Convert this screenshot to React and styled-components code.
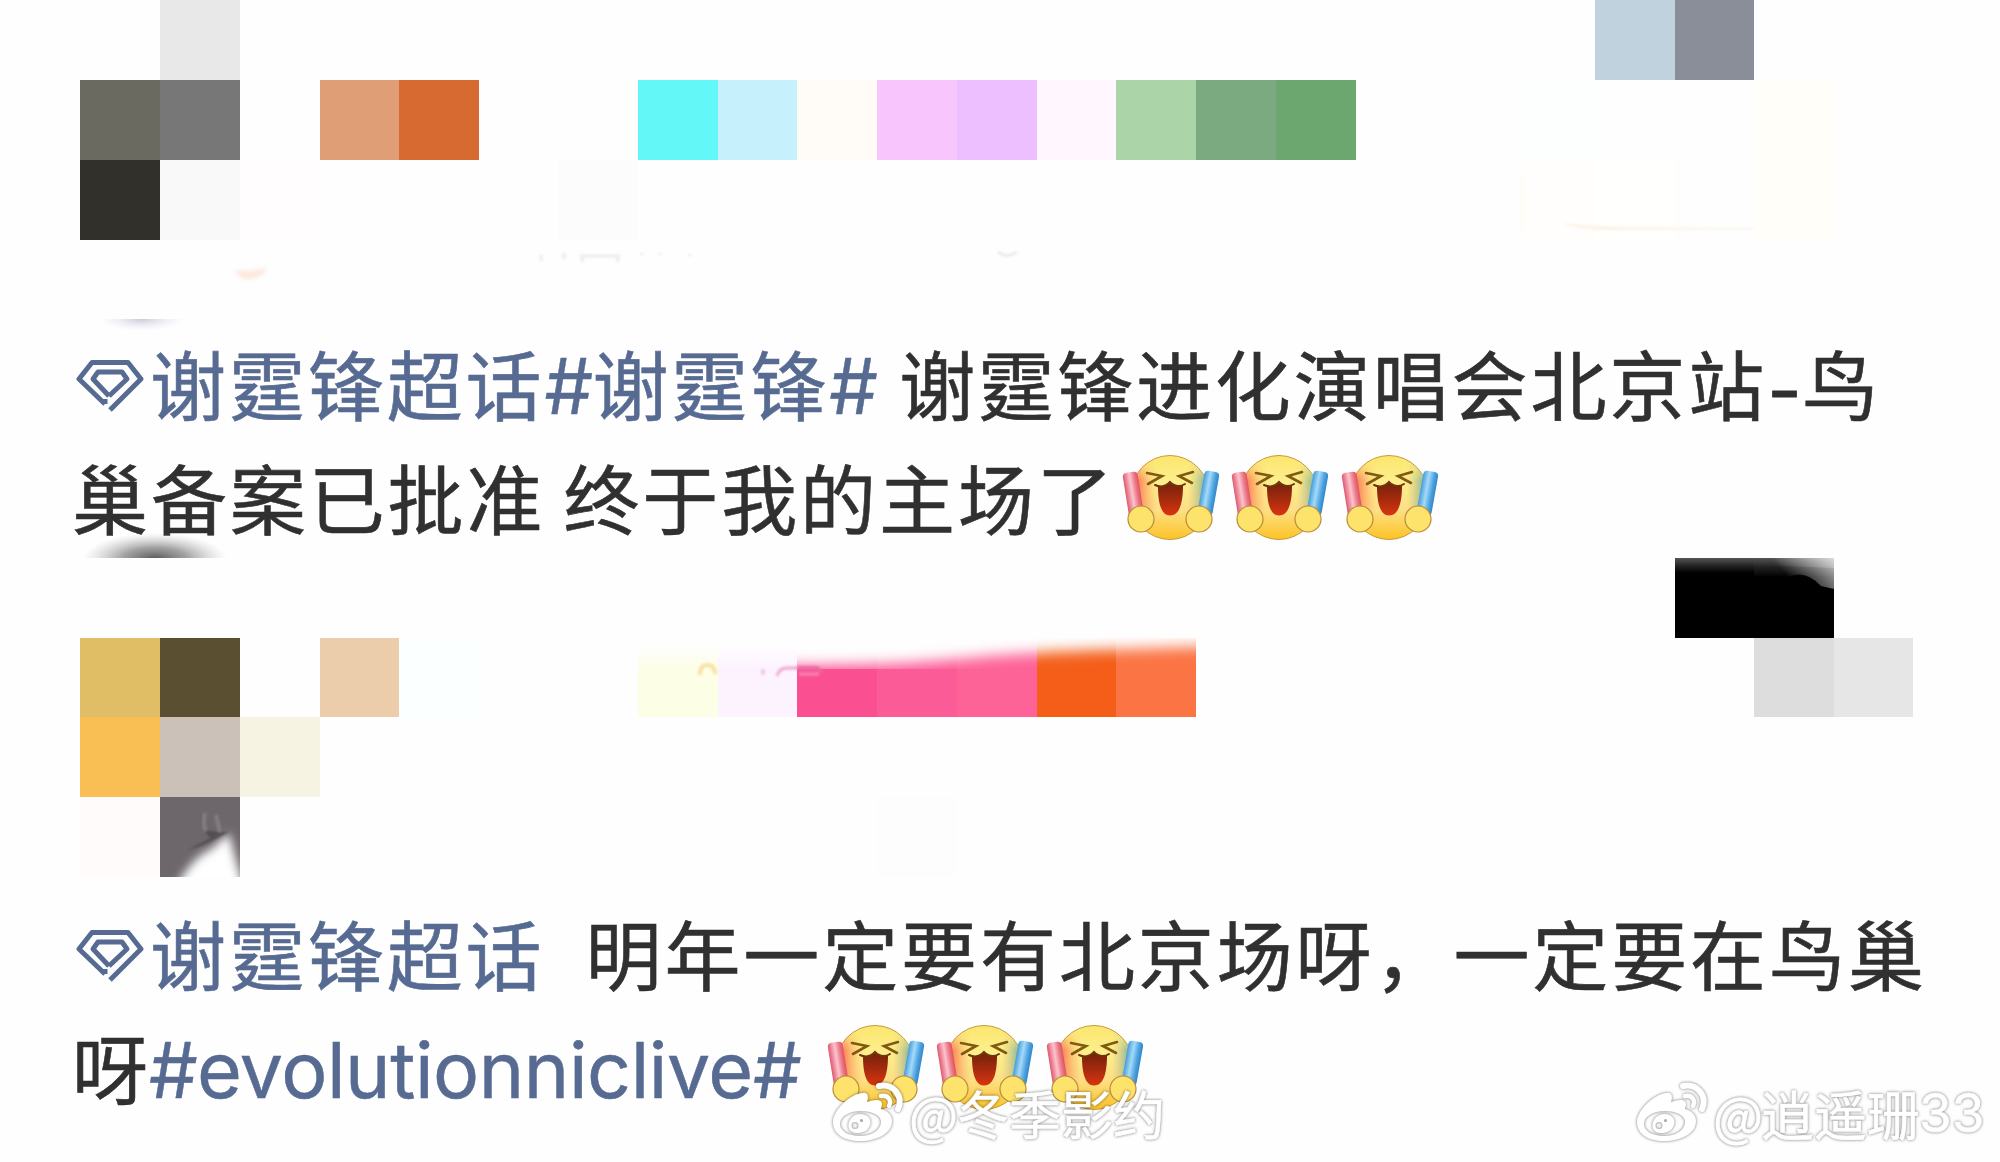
import styled, { createGlobalStyle } from 'styled-components';

const GlobalStyle = createGlobalStyle`
    body {
        margin: 0;
        background: #fefefe;
    }
`;

// [column, row, background]
const TOP_BLOCKS = [
    [3, 1, '#e8e8e8'],
    [21, 1, '#c0d2de'],
    [22, 1, '#898e99'],
    [2, 2, '#6b6a61'],
    [3, 2, '#777777'],
    [5, 2, '#df9e76'],
    [6, 2, '#d76a30'],
    [9, 2, '#63f7f8'],
    [10, 2, '#c6f0fc'],
    [11, 2, '#fffcf8'],
    [12, 2, '#f8c6fd'],
    [13, 2, '#edbffe'],
    [14, 2, '#fff6fe'],
    [15, 2, '#abd4a8'],
    [16, 2, '#7caa80'],
    [17, 2, '#6ba76e'],
    [20, 2, '#fcfffe'],
    [23, 2, '#fffef8'],
    [2, 3, '#32302a'],
    [3, 3, '#f9f9f9'],
    [4, 3, '#fffdfd'],
    [8, 3, '#fcfcfc'],
    [20, 3, '#fffefc'],
    [21, 3, '#fffffd'],
    [23, 3, '#fffef8'],
];

const BOTTOM_BLOCKS = [
    [22, 1, 'linear-gradient(#555 0, #222 8px, #000 15px)'],
    [23, 1, 'linear-gradient(#555 0, #222 9px, #000 19px)'],
    [2, 2, '#e0be65'],
    [3, 2, '#5b4f31'],
    [5, 2, '#eccdab'],
    [6, 2, '#fbffff'],
    [9, 2, 'linear-gradient(#fefefe 6px, #fcfee5 34px)'],
    [10, 2, 'linear-gradient(#fefefe 8px, #fdf3ff 30px)'],
    [11, 2, '#fa5092'],
    [12, 2, '#fb5b96'],
    [13, 2, '#fd6397'],
    [14, 2, '#f45e19'],
    [15, 2, '#fb7444'],
    [23, 2, '#dddddd'],
    [24, 2, '#e6e6e6'],
    [2, 3, '#f9be54'],
    [3, 3, '#cbc1b9'],
    [4, 3, '#f7f3e2'],
    [2, 4, '#fffbfb'],
    [12, 4, '#fdfdfd'],
];

const Gem = () => (
    <GemIcon viewBox="0 0 68 56">
        <path d="M29 45 L3 20 L16 3.5 H52 L65 20 L34 51" />
        <path d="M29 45 V40 M33 37 L17 20 L22 13 H46 L51 20 L33 37" />
    </GemIcon>
);

const Cheer = () => (
    <CheerIcon viewBox="0 0 98 90">
        <defs>
            <linearGradient id="face" x1="0" y1="0" x2="0" y2="1">
                <stop offset="0" stopColor="#fbe66c" />
                <stop offset="0.3" stopColor="#fdee8c" />
                <stop offset="0.65" stopColor="#fddf86" />
                <stop offset="1" stopColor="#fcc324" />
            </linearGradient>
            <linearGradient id="cheeks" x1="0" y1="0" x2="1" y2="0">
                <stop offset="0.12" stopColor="#fb7a52" stopOpacity="0.85" />
                <stop offset="0.34" stopColor="#fdb06a" stopOpacity="0" />
                <stop offset="0.72" stopColor="#d8c48c" stopOpacity="0" />
                <stop offset="0.9" stopColor="#9cbc94" stopOpacity="0.9" />
            </linearGradient>
            <linearGradient id="fadeUp" x1="0" y1="0" x2="0" y2="1">
                <stop offset="0" stopColor="#000" />
                <stop offset="0.3" stopColor="#fff" />
                <stop offset="0.7" stopColor="#fff" />
                <stop offset="1" stopColor="#000" />
            </linearGradient>
            <mask id="band">
                <rect x="0" y="8" width="98" height="66" fill="url(#fadeUp)" />
            </mask>
            <linearGradient id="red" x1="0" y1="0" x2="1" y2="0">
                <stop offset="0" stopColor="#e0576f" />
                <stop offset="0.45" stopColor="#fcc4cd" />
                <stop offset="0.75" stopColor="#ec7a89" />
                <stop offset="1" stopColor="#dd5262" />
            </linearGradient>
            <linearGradient id="blue" x1="0" y1="0" x2="1" y2="0">
                <stop offset="0" stopColor="#459ddb" />
                <stop offset="0.4" stopColor="#a4dafa" />
                <stop offset="0.75" stopColor="#4fa3de" />
                <stop offset="1" stopColor="#2f86cc" />
            </linearGradient>
            <linearGradient id="mouth" x1="0" y1="0" x2="0" y2="1">
                <stop offset="0" stopColor="#74200a" />
                <stop offset="0.5" stopColor="#a52b0d" />
                <stop offset="1" stopColor="#da3410" />
            </linearGradient>
        </defs>
        <ellipse cx="48" cy="44.5" rx="40" ry="42" fill="url(#face)" stroke="#c69a3c" strokeWidth="1" />
        <ellipse cx="48" cy="44.5" rx="40" ry="42" fill="url(#cheeks)" mask="url(#band)" />
        <rect x="3.5" y="19" width="15" height="44" rx="4" fill="url(#red)" transform="rotate(-9 11 40)" />
        <rect x="79" y="18" width="15" height="44" rx="4" fill="url(#blue)" transform="rotate(10 86 40)" />
        <path d="M25 20 L40 23 L26 31 M71 19 L57 23 L70 30" fill="none" stroke="#805a10" strokeWidth="2.6" strokeLinecap="round" />
        <path d="M36 33 Q43 34 48 30 Q54 34 61 32 C61 43 60 62.5 48 62.5 C37 62.5 36 43 36 33Z" fill="url(#mouth)" />
        <path d="M33 32 Q42 36 48 29 Q55 36 63 31" fill="none" stroke="#6d350a" strokeWidth="2" strokeLinecap="round" />
        <circle cx="19" cy="66" r="13" fill="#fde26c" stroke="#b98d3a" strokeWidth="1.2" />
        <circle cx="77" cy="66" r="13" fill="#fde26c" stroke="#b98d3a" strokeWidth="1.2" />
    </CheerIcon>
);

const Cheers = () => (
    <>
        <Cheer />
        <Cheer />
        <Cheer />
    </>
);

const Weibo = () => (
    <WeiboIcon viewBox="0 0 72 60">
        <path
            fillRule="evenodd"
            d="M31 10 C36 9 37 14 35 19 C43 16 50 16 50 21 C50 23 49 25 49 26 C55 28 60 31 60 38 C60 50 46 58 28 58 C12 58 1 51 1 39 C1 28 17 11 31 10Z M29 28 C16 28 8 34 8 41 C8 48 16 53 28 53 C40 53 49 47 49 39 C49 32 40 28 29 28Z"
        />
        <path fillRule="evenodd" d="M28 31 C36 31 40 36 38 42 C36 48 31 50 25 50 C18 50 15 45 17 39 C19 34 23 31 28 31Z M23 39 A3.5 3.5 0 1 0 23 46 A3.5 3.5 0 1 0 23 39Z M29.5 36 A1.5 1.5 0 1 0 29.5 39 A1.5 1.5 0 1 0 29.5 36Z" />
        <path d="M47 3 C61 0 72 13 66 26" fill="none" stroke="#fff" strokeWidth="6" strokeLinecap="round" />
        <path d="M49 13 C56 12 60 17 57 23" fill="none" stroke="#fff" strokeWidth="4.5" strokeLinecap="round" />
    </WeiboIcon>
);

const Blocks = ({ items }) =>
    items.map(([col, row, fill]) => <Block key={`${col}-${row}`} $col={col} $row={row} $fill={fill} />);

const App = () => (
    <Page>
        <GlobalStyle />
        <Mosaic $rows="80px 80px 80px">
            <Blocks items={TOP_BLOCKS} />
        </Mosaic>
        <Post $gap={90}>
            <Line $start={76}>
                <Gem />
                <Link $before={6}>谢霆锋超话</Link>
                <Hash>#</Hash>
                <Link>谢霆锋</Link>
                <Hash>#</Hash>
                <Words $before={22}>谢霆锋进化演唱会北京站</Words>
                <Dash>-</Dash>
                <Words>鸟</Words>
            </Line>
            <Line $start={72}>
                <Words>巢备案已批准</Words>
                <Words $before={18}>终于我的主场了</Words>
                <Cheers />
            </Line>
        </Post>
        <Mosaic $rows="80px 79px 80px 80px">
            <Blocks items={BOTTOM_BLOCKS} />
            <Torn viewBox="0 0 80 80">
                <defs>
                    <filter id="soft" x="-40%" y="-40%" width="180%" height="180%">
                        <feGaussianBlur stdDeviation="5" />
                    </filter>
                    <filter id="softEdge">
                        <feGaussianBlur stdDeviation="1" />
                    </filter>
                </defs>
                <rect width="80" height="80" fill="#6d676c" />
                <path d="M14 98 Q32 62 52 54 L68 40 Q72 58 84 98Z" fill="#fff" stroke="#fff" strokeWidth="4" filter="url(#soft)" />
                <path d="M28 53 Q48 48 70 34 L61 35 L44 33 L50 41Z" fill="#4b464b" opacity="0.75" filter="url(#softEdge)" />
                <path d="M45 16 Q42 28 46 34 M56 18 L60 35" stroke="#827d81" strokeWidth="4" fill="none" filter="url(#softEdge)" />
            </Torn>
        </Mosaic>
        <Post $gap={23}>
            <Line $start={76}>
                <Gem />
                <Link $before={6}>谢霆锋超话</Link>
                <Words $before={41}>明年一定要有北京场呀，一定要在鸟巢</Words>
            </Line>
            <Line $start={72}>
                <Words>呀</Words>
                <Hash $shift={-2}>#</Hash>
                <Tag>evolutionniclive</Tag>
                <Hash>#</Hash>
                <Spacer />
                <Cheers />
            </Line>
        </Post>

        <Smudge $x={80} $y={532} $w={150} $h={26} viewBox="0 0 150 26">
            <defs>
                <radialGradient id="ink" cx="0.5" cy="0.5" r="0.5">
                    <stop offset="0" stopColor="#444" stopOpacity="0.9" />
                    <stop offset="0.45" stopColor="#666" stopOpacity="0.6" />
                    <stop offset="1" stopColor="#aaa" stopOpacity="0" />
                </radialGradient>
            </defs>
            <ellipse cx="75" cy="27" rx="72" ry="26" fill="url(#ink)" />
        </Smudge>
        <Smudge $x={98} $y={319} $w={88} $h={12} viewBox="0 0 88 12">
            <defs>
                <radialGradient id="mist" cx="0.5" cy="0.5" r="0.5">
                    <stop offset="0" stopColor="#c9cad8" />
                    <stop offset="1" stopColor="#e8e8f4" stopOpacity="0" />
                </radialGradient>
            </defs>
            <ellipse cx="44" cy="0" rx="43" ry="12" fill="url(#mist)" />
        </Smudge>
        <Smudge $x={232} $y={262} $w={38} $h={20} $blur={2} viewBox="0 0 38 20">
            <path d="M2 8 Q19 11 35 6 Q29 17 18 17 Q8 17 2 8Z" fill="#fde6da" />
        </Smudge>
        <Smudge $x={530} $y={250} $w={520} $h={14} $blur={1} viewBox="0 0 520 14">
            <path d="M11 5V11M34 3V9M52 12V6H88V12M112 3V5M130 3V5M160 4V6M468 2Q477 9 487 2" fill="none" stroke="#ececec" strokeWidth="3" />
        </Smudge>
        <Smudge $x={1520} $y={170} $w={240} $h={70} $blur={0.8} viewBox="0 0 240 70">
            <path d="M2 6V62" stroke="#fff9f4" strokeWidth="2" />
            <path d="M42 53 Q64 56 110 57 L234 58 V59 L100 60 Q60 61 42 53Z" fill="#fbf3e6" />
        </Smudge>
        <Smudge $x={797} $y={636} $w={399} $h={36} viewBox="0 0 399 36">
            <defs>
                <filter id="haze" x="-5%" y="-60%" width="110%" height="220%">
                    <feGaussianBlur stdDeviation="3 7" />
                </filter>
            </defs>
            <svg width="399" height="33">
                <path d="M-20 -30 V29 Q80 31 160 23 Q230 16 300 14 L420 10 V-30Z" fill="#fefefe" filter="url(#haze)" />
            </svg>
        </Smudge>
        <Smudge $x={695} $y={660} $w={135} $h={20} $blur={0.8} viewBox="0 0 135 20">
            <path d="M5 15Q5 5 12 5Q20 5 20 14" fill="none" stroke="#f8e2a8" strokeWidth="4" />
            <path d="M68 9V15" stroke="#f3cbe6" strokeWidth="4" />
            <path d="M82 16Q84 8 92 8H102" fill="none" stroke="#f0b4d8" strokeWidth="3.5" />
            <path d="M102 8H122L127 12" fill="none" stroke="#e86aa2" strokeWidth="3.5" />
            <path d="M104 14H124" fill="none" stroke="#fb78ac" strokeWidth="4" />
        </Smudge>
        <Smudge $x={1674} $y={558} $w={160} $h={32} viewBox="0 0 160 32">
            <defs>
                <linearGradient id="glare" gradientUnits="userSpaceOnUse" x1="118" y1="24" x2="154" y2="-8">
                    <stop offset="0" stopColor="#fff" stopOpacity="0" />
                    <stop offset="1" stopColor="#fff" stopOpacity="0.75" />
                </linearGradient>
                <linearGradient id="sheen" x1="0" y1="0" x2="1" y2="0">
                    <stop offset="0.4" stopColor="#fff" stopOpacity="0" />
                    <stop offset="1" stopColor="#fff" stopOpacity="0.2" />
                </linearGradient>
            </defs>
            <path d="M60 0H160V10L60 6Z" fill="url(#sheen)" />
            <path d="M60 0H160V31L147 28Q128 8 108 23Z" fill="url(#glare)" />
        </Smudge>

        <Watermark $x={832}>
            <Weibo />
            <At>@</At>
            <Mark>冬季影约</Mark>
        </Watermark>
        <Watermark $x={1636}>
            <Weibo />
            <At $wide>@</At>
            <Mark $wide>逍遥珊</Mark>
            <Digits>33</Digits>
        </Watermark>
    </Page>
);

const Page = styled.main`
    position: relative;
    width: 2000px;
    height: 1162px;
    overflow: hidden;
    background: #fefefe;
    font-family: Inter, 'Noto Sans CJK SC', sans-serif;
    font-size: 77px;
    color: #303030;
`;

const Mosaic = styled.div`
    display: grid;
    grid-template-columns: 80px 80px 80px 80px 79px 80px 80px 79px 80px 79px 80px 80px 80px 79px 80px 80px 80px 79px 80px 80px 80px 79px 80px 79px;
    grid-template-rows: ${({ $rows }) => $rows};
`;

const Block = styled.div`
    grid-column: ${({ $col }) => $col};
    grid-row: ${({ $row }) => $row};
    background: ${({ $fill }) => $fill};
`;

const Torn = styled.svg`
    grid-column: 3;
    grid-row: 4;
    width: 80px;
    height: 80px;
    overflow: hidden;
`;

const Post = styled.article`
    padding-top: ${({ $gap }) => $gap}px;
`;

const Line = styled.div`
    display: flex;
    align-items: center;
    height: 114px;
    padding-left: ${({ $start }) => $start}px;
    line-height: 114px;
    white-space: nowrap;
`;

const Words = styled.span`
    margin: -10px 0 0 ${({ $before = 0 }) => $before}px;
    font-family: 'Noto Sans CJK SC', sans-serif;
    font-size: 76px;
    letter-spacing: 2.9px;
    -webkit-text-stroke: 0.6px currentColor;
`;

const Link = styled(Words)`
    color: #576b92;
`;

const Hash = styled.span`
    width: 48px;
    margin: -2px ${({ $shift = 0 }) => -$shift}px 0 ${({ $shift = 0 }) => $shift}px;
    color: #576b92;
    text-align: center;
    -webkit-text-stroke: 0.4px currentColor;
`;

const Dash = styled.span`
    width: 35px;
    margin-top: 5px;
    font-size: 74px;
    text-align: center;
    -webkit-text-stroke: 1px currentColor;
`;

const Tag = styled.span`
    width: 554px;
    margin-top: -2px;
    color: #576b92;
    letter-spacing: -0.45px;
    text-indent: -2px;
    -webkit-text-stroke: 0.5px currentColor;
`;

const Spacer = styled.span`
    width: 20px;
`;

const GemIcon = styled.svg`
    width: 68px;
    height: 56px;
    fill: none;
    stroke: #576b92;
    stroke-width: 5;
    stroke-linejoin: round;
`;

const CheerIcon = styled.svg`
    flex: none;
    width: 98px;
    height: 90px;
    margin: 0 5.5px 6px 6px;
`;

const Smudge = styled.svg`
    position: absolute;
    left: ${({ $x }) => $x}px;
    top: ${({ $y }) => $y}px;
    width: ${({ $w }) => $w}px;
    height: ${({ $h }) => $h}px;
    filter: ${({ $blur }) => ($blur ? `blur(${$blur}px)` : 'none')};
`;

const Watermark = styled.div`
    position: absolute;
    left: ${({ $x }) => $x}px;
    top: 1083px;
    display: flex;
    align-items: center;
    height: 60px;
    filter: drop-shadow(0 0 1.5px rgba(0, 0, 0, 0.35)) drop-shadow(0 0 1.5px rgba(0, 0, 0, 0.2));
`;

const WeiboIcon = styled.svg`
    width: 72px;
    height: 60px;
    fill: #fff;
    overflow: visible;
`;

const Mark = styled.span`
    font-family: 'Noto Sans CJK SC', sans-serif;
    font-size: ${({ $wide }) => ($wide ? 53 : 52)}px;
    line-height: 60px;
    color: #fff;
    white-space: nowrap;
    -webkit-text-stroke: 0.6px #fff;
`;

const At = styled(Mark)`
    width: ${({ $wide }) => ($wide ? 48 : 48)}px;
    margin-left: 5px;
`;

const Digits = styled(Mark)`
    margin-left: -1px;
    font-family: Inter, sans-serif;
    font-size: 53px;
`;

export default App;
